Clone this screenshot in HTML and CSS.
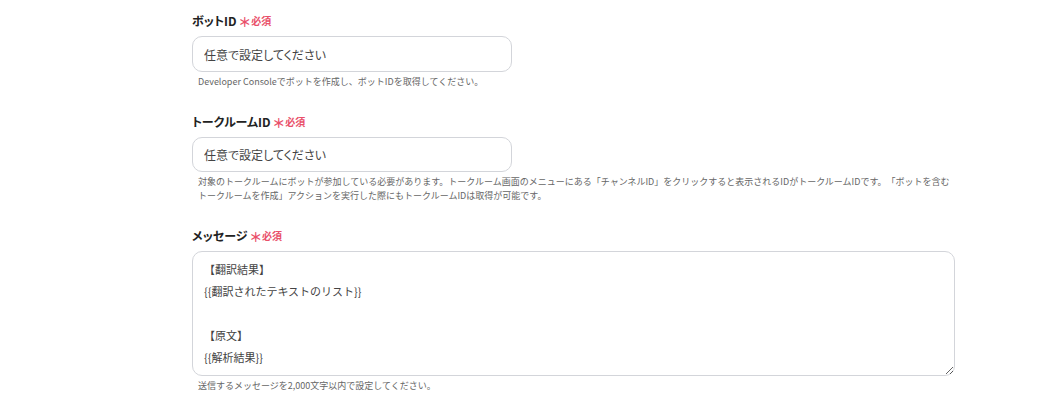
FILE: index.html
```html
<!DOCTYPE html>
<html lang="ja">
<head>
<meta charset="utf-8">
<link rel="stylesheet" href="styles.css">
</head>
<body>
<main class="form">
  <div class="field">
    <label class="label">ボットID<span class="req"><span class="star">＊</span>必須</span></label>
    <input class="input" type="text" value="任意で設定してください">
    <p class="help">Developer Consoleでボットを作成し、ボットIDを取得してください。</p>
  </div>
  <div class="field field-2">
    <label class="label">トークルームID<span class="req"><span class="star">＊</span>必須</span></label>
    <input class="input input-2" type="text" value="任意で設定してください">
    <p class="help">対象のトークルームにボットが参加している必要があります。トークルーム画面のメニューにある「チャンネルID」をクリックすると表示されるIDがトークルームIDです。「ボットを含むトークルームを作成」アクションを実行した際にもトークルームIDは取得が可能です。</p>
  </div>
  <div class="field field-3">
    <label class="label">メッセージ<span class="req"><span class="star">＊</span>必須</span></label>
    <textarea class="textarea">【翻訳結果】
{{翻訳されたテキストのリスト}}

【原文】
{{解析結果}}</textarea>
    <p class="help">送信するメッセージを2,000文字以内で設定してください。</p>
  </div>
</main>
</body>
</html>
```

FILE: styles.css
```css
* { box-sizing: border-box; }
html, body {
  margin: 0;
  padding: 0;
  background: #ffffff;
}
body {
  font-family: "Noto Sans CJK JP", "Noto Sans", sans-serif;
  font-feature-settings: "pkna";
  color: #333;
}
.form {
  width: 763px;
  margin-left: 192px;
  padding-top: 11px;
  display: flex;
  flex-direction: column;
}
.field {
  display: flex;
  flex-direction: column;
}
.field-2 { margin-top: 23px; }
.field-3 { margin-top: 23px; }
.label {
  display: flex;
  align-items: center;
  height: 18px;
  font-size: 12px;
  font-weight: 700;
  color: #222;
  margin-bottom: 7px;
  font-feature-settings: "palt";
}
.req {
  display: inline-flex;
  align-items: center;
  color: #e9506a;
  font-size: 10px;
  font-weight: 700;
  margin-left: 3px;
}
.star {
  font-size: 13px;
  font-weight: 700;
  margin-right: 1px;
  position: relative;
  top: 1px;
}
.input {
  width: 320px;
  height: 36px;
  border: 1px solid #d3d5da;
  border-radius: 10px;
  padding: 0 11px;
  font-family: inherit;
  font-feature-settings: "palt";
  font-size: 12px;
  color: #444;
  background: #fff;
  outline: none;
}
.input-2 { height: 35px; }
.textarea {
  width: 763px;
  height: 125px;
  border: 1px solid #d3d5da;
  border-radius: 10px;
  padding: 6px 11px;
  font-family: inherit;
  font-feature-settings: "pkna";
  font-size: 11px;
  line-height: 22px;
  color: #444;
  background: #fff;
  outline: none;
  resize: vertical;
  display: block;
}
.help {
  margin: 3px 0 0;
  padding: 0 4px 0 6px;
  font-size: 9px;
  line-height: 14px;
  color: #666;
  font-feature-settings: "pkna";
  text-spacing-trim: space-all;
}
```
